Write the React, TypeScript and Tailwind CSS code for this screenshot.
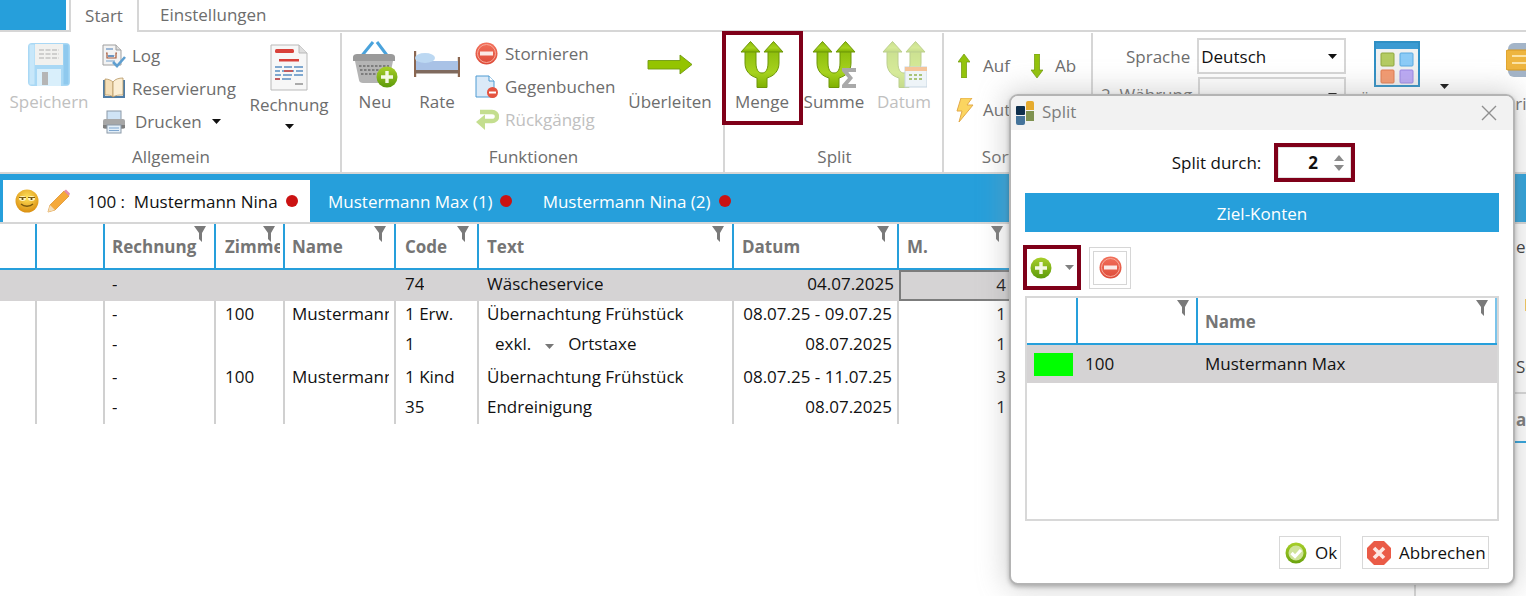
import type { ReactNode } from "react";

type IconProps = { className?: string };

function Caret({ color = "#111", className = "" }: { color?: string; className?: string }) {
  return (
    <svg viewBox="0 0 9 5" className={`h-[5px] w-[9px] ${className}`}>
      <path d="M0 0h9L4.5 5z" fill={color} />
    </svg>
  );
}

function Funnel({ className = "" }: IconProps) {
  return (
    <svg viewBox="0 0 12 16" className={`absolute top-[2px] h-[16px] w-[12px] ${className}`}>
      <path d="M0 0h12L8 7v9l-3-3V7z" fill="#7a7a7a" />
    </svg>
  );
}

function Floppy() {
  return (
    <svg viewBox="0 0 42 43" className="h-[43px] w-[42px]">
      <rect x="0" y="0" width="42" height="43" rx="4" fill="#a9d8f5" />
      <rect x="1.5" y="1.5" width="5" height="40" fill="#c7e7fa" />
      <rect x="35.5" y="1.5" width="5" height="40" fill="#8fc9ee" />
      <rect x="7" y="1" width="28" height="21" fill="#f1f1ef" />
      <path d="M11 7h20M11 11h20M11 15h20" stroke="#c4c4c4" strokeWidth="1.4" strokeDasharray="5 1.5" />
      <rect x="9" y="26" width="24" height="17" fill="#d9effb" />
      <rect x="14" y="29" width="6" height="13" fill="#b5b5b5" />
    </svg>
  );
}

function LogIcon() {
  return (
    <svg viewBox="0 0 24 24" className="h-[24px] w-[24px]">
      <path d="M1 1h13l5 5v15H1z" fill="#f3f3f3" stroke="#9f9f9f" />
      <path d="M14 1v5h5" fill="#dcdcdc" stroke="#9f9f9f" />
      <path d="M4 5h7" stroke="#6d96c4" strokeWidth="1.3" />
      <path d="M4 9h1v5h9V9h1" fill="none" stroke="#a85a3a" strokeWidth="1.2" />
      <path d="M6 11l1 2 1-2 1 2 1-2 1 2 1-2" fill="none" stroke="#4b7fb6" strokeWidth="1" />
      <path d="M4 17h9" stroke="#8cb0d4" strokeWidth="1.2" />
      <path d="M11 18l4 4 8-9" fill="none" stroke="#5f9fd0" strokeWidth="2.6" />
    </svg>
  );
}

function BookIcon() {
  return (
    <svg viewBox="0 0 24 23" className="h-[23px] w-[24px]">
      <path d="M1 3v18h22V3h-2v16H3V3z" fill="#4f7da6" />
      <path d="M3 2c3 0 6 1 8 3v15c-2-2-5-2-8-2z" fill="#f4dfb8" stroke="#b59460" strokeWidth=".8" />
      <path d="M21 1c-4 0-8 1-10 4v15c3-2 6-2 10-2z" fill="#fbeed4" stroke="#b59460" strokeWidth=".8" />
    </svg>
  );
}

function PrinterIcon() {
  return (
    <svg viewBox="0 0 24 24" className="h-[24px] w-[24px]">
      <rect x="5" y="1" width="14" height="9" fill="#cfe3f5" stroke="#8c9aa8" />
      <rect x="1" y="9" width="22" height="10" rx="2" fill="#a7a7a7" />
      <rect x="1" y="15" width="22" height="3" fill="#7f7f7f" />
      <rect x="5" y="15" width="14" height="8" fill="#e2eef8" stroke="#8c9aa8" />
      <path d="M7 18h10M7 20.5h10" stroke="#7ea6cf" />
    </svg>
  );
}

function InvoiceIcon() {
  return (
    <svg viewBox="0 0 38 47" className="h-[47px] w-[38px]">
      <path d="M1 1h28l8 8v37H1z" fill="#f7f7f7" stroke="#b9b9b9" />
      <path d="M29 1v8h8" fill="#dedede" stroke="#b9b9b9" />
      <rect x="5" y="5" width="19" height="4" rx="1.5" fill="#d8413a" />
      <rect x="9" y="15" width="20" height="2.5" fill="#d8413a" />
      <path d="M5 23h7M14 23h8M24 23h9M5 27h5M12 27h12M26 27h7M5 31h6M13 31h9M24 31h9M5 35h5M12 35h9" stroke="#5a8fc2" strokeWidth="1.4" />
      <path d="M14 27h9M5 35h5" stroke="#d8413a" strokeWidth="1.4" />
      <path d="M25 40h8" stroke="#8a8a8a" strokeWidth="1.4" />
    </svg>
  );
}

function PlusBadge({ size = 22 }: { size?: number }) {
  return (
    <svg viewBox="0 0 22 22" width={size} height={size}>
      <defs>
        <linearGradient id="plusGrad" x1="0" y1="0" x2="0" y2="1">
          <stop offset="0" stopColor="#a8cf2a" />
          <stop offset="1" stopColor="#5d9a0a" />
        </linearGradient>
      </defs>
      <circle cx="11" cy="11" r="10.5" fill="url(#plusGrad)" />
      <path d="M11 5v12M5 11h12" stroke="#f4f9e4" strokeWidth="3.4" />
    </svg>
  );
}

function MinusBadge({ size = 23 }: { size?: number }) {
  return (
    <svg viewBox="0 0 23 23" width={size} height={size}>
      <defs>
        <linearGradient id="minusGrad" x1="0" y1="0" x2="0" y2="1">
          <stop offset="0" stopColor="#f2705a" />
          <stop offset="1" stopColor="#dd4b39" />
        </linearGradient>
      </defs>
      <circle cx="11.5" cy="11.5" r="11" fill="url(#minusGrad)" />
      <circle cx="11.5" cy="11.5" r="9" fill="none" stroke="#f8a999" strokeWidth="1" />
      <rect x="5" y="9.5" width="13" height="4" fill="#fbeae6" />
    </svg>
  );
}

function Basket() {
  return (
    <svg viewBox="0 0 46 47" className="h-[47px] w-[46px]">
      <path d="M21 1L8 17M25 1l12 16" stroke="#4aa3dc" strokeWidth="3" fill="none" />
      <path d="M1 16c0-2 2-3 4-3h34c2 0 4 1 4 3v4H1z" fill="#9a9a9a" />
      <path d="M3 20h38l-4 19c0 2-2 3-4 3H11c-2 0-4-1-4-3z" fill="#b4b4b4" />
      <path d="M7 25h30M8 29h28M9 33h26" stroke="#7d7d7d" strokeWidth="2" strokeDasharray="2.5 1.5" />
      <g transform="translate(24 25)">
        <PlusBadge />
      </g>
    </svg>
  );
}

function Bed() {
  return (
    <svg viewBox="0 0 46 28" className="h-[28px] w-[46px]">
      <path d="M1 0v26M45 6v20" stroke="#8a6650" strokeWidth="2.4" />
      <rect x="2" y="10" width="42" height="12" fill="#a9c2e6" />
      <rect x="2" y="19" width="42" height="3.5" fill="#7f6a5e" />
      <ellipse cx="11" cy="7" rx="10" ry="5" fill="#bcd8f2" />
    </svg>
  );
}

function GegenIcon() {
  return (
    <svg viewBox="0 0 24 24" className="h-[24px] w-[24px]">
      <path d="M1 1h13l5 5v16H1z" fill="#dbeaf8" stroke="#4f9bd2" />
      <path d="M14 1v5h5" fill="#fff" stroke="#4f9bd2" />
      <circle cx="17.5" cy="17.5" r="5.5" fill="#e5533f" />
      <rect x="14" y="16.5" width="7" height="2" fill="#fff" />
    </svg>
  );
}

function UndoIcon() {
  return (
    <svg viewBox="0 0 24 22" className="h-[22px] w-[24px]">
      <path d="M5 3h12c3 0 5 2 5 4.5S20 12 17 12H9" fill="none" stroke="#c4de8f" strokeWidth="4.4" />
      <path d="M10 5.5L1 13l9 8z" fill="#c4de8f" />
    </svg>
  );
}

function ArrowRightGreen() {
  return (
    <svg viewBox="0 0 46 21" className="h-[21px] w-[46px]">
      <path d="M1 6.5h32V1l12 9.5L33 20v-5H1z" fill="#94c400" stroke="#6f9a10" strokeWidth=".9" />
    </svg>
  );
}

function SplitArrows({ id, faded = false, children }: { id: string; faded?: boolean; children?: ReactNode }) {
  return (
    <svg viewBox="0 0 46 47" className="h-[47px] w-[46px]">
      <defs>
        <linearGradient id={id} x1="0" y1="0" x2="0" y2="1">
          <stop offset="0" stopColor="#8dbd0c" />
          <stop offset=".6" stopColor="#a6d21e" />
          <stop offset="1" stopColor="#7fb000" />
        </linearGradient>
      </defs>
      <g opacity={faded ? 0.45 : 1} fill={`url(#${id})`} stroke="#6d9608" strokeWidth="1">
        <path d="M6 9V22C6 30 11 35 18 37V46.5H28V37C35 35 40 30 40 22V9H29V22C29 28 27 32 23 32C19 32 17 28 17 22V9Z" />
        <path d="M2 11L11.5 .5L21 11ZM25 11L34.5 .5L44 11Z" />
      </g>
      {children}
    </svg>
  );
}

function ArrowV({ up }: { up: boolean }) {
  return (
    <svg viewBox="0 0 12 24" className="h-[24px] w-[12px]">
      <path
        d={up ? "M6 0l6 8H8.5v16h-5V8H0z" : "M6 24l6-8H8.5V0h-5v16H0z"}
        fill="#93c30c"
        stroke="#6d9608"
        strokeWidth=".7"
      />
    </svg>
  );
}

function Bolt() {
  return (
    <svg viewBox="0 0 18 24" className="h-[24px] w-[18px]">
      <path d="M5 0h11l-5 7h6L3 24l3-11H1z" fill="#fbd560" stroke="#e2a94a" />
    </svg>
  );
}

function LayoutIcon() {
  return (
    <svg viewBox="0 0 46 46" className="h-[46px] w-[46px]">
      <rect x="1" y="1" width="44" height="44" fill="#f1f1f1" stroke="#2f8fc4" strokeWidth="2" />
      <rect x="2" y="2" width="42" height="6" fill="#3b9ad2" />
      <rect x="7" y="12" width="13" height="13" rx="1" fill="#b4cb62" stroke="#8fa83e" />
      <rect x="26" y="12" width="13" height="13" rx="1" fill="#8ccbf7" stroke="#5aa9e0" />
      <rect x="7" y="29" width="13" height="13" rx="1" fill="#f49a70" stroke="#e07b4e" />
      <rect x="26" y="29" width="13" height="13" rx="1" fill="#bba9f5" stroke="#9a86e2" />
    </svg>
  );
}

function DrawerIcon() {
  return (
    <svg viewBox="0 0 44 34" className="h-[34px] w-[44px]">
      <rect x="2" y="0" width="40" height="34" rx="6" fill="#a3b4c8" />
      <rect x="0" y="7" width="44" height="20" rx="2" fill="#eeb53f" stroke="#d79820" />
      <path d="M6 13h28M6 20h28" stroke="#fbe3a6" strokeWidth="2" />
    </svg>
  );
}

function Smiley() {
  return (
    <svg viewBox="0 0 24 24" className="h-[24px] w-[24px]">
      <defs>
        <radialGradient id="smile" cx=".5" cy=".35" r=".7">
          <stop offset="0" stopColor="#ffe25a" />
          <stop offset="1" stopColor="#d8890c" />
        </radialGradient>
      </defs>
      <circle cx="12" cy="12" r="11.5" fill="url(#smile)" />
      <ellipse cx="7.5" cy="9.5" rx="3.5" ry="2.4" fill="#fff6c4" />
      <ellipse cx="16.5" cy="9.5" rx="3.5" ry="2.4" fill="#fff6c4" />
      <path d="M4 8.5h7M13 8.5h7" stroke="#7a5a10" strokeWidth="1.2" />
      <circle cx="7.5" cy="10" r="1.1" fill="#5a4310" />
      <circle cx="16.5" cy="10" r="1.1" fill="#5a4310" />
      <path d="M6 15c3 3 9 3 12 0" fill="none" stroke="#7a5a10" strokeWidth="1.3" />
    </svg>
  );
}

function Pencil() {
  return (
    <svg viewBox="0 0 24 24" className="h-[24px] w-[24px]">
      <path d="M1 23l2-7L17 2l5 5L8 21z" fill="#f5a93a" stroke="#d98a20" strokeWidth=".7" />
      <path d="M17 2l2-1.5 4 4L22 7z" fill="#e48db0" />
      <path d="M1 23l2-7 5 5z" fill="#f3dcb6" />
    </svg>
  );
}

function DialogLogo() {
  return (
    <div className="flex h-[24px] w-[18px] gap-[1px]">
      <div className="flex flex-1 flex-col gap-[1px] pt-[5px]">
        <div className="h-[9px] rounded-[1px] bg-[#0e2f4d]" />
        <div className="h-[9px] rounded-b-[2px] bg-[#45749b]" />
      </div>
      <div className="flex flex-1 flex-col gap-[1px]">
        <div className="h-[9px] rounded-t-[2px] bg-[#e6ab2e]" />
        <div className="h-[10px] bg-[#7f9250]" />
      </div>
    </div>
  );
}

function OkIcon() {
  return (
    <svg viewBox="0 0 22 22" className="h-[22px] w-[22px]">
      <defs>
        <linearGradient id="okGrad" x1="0" y1="0" x2="0" y2="1">
          <stop offset="0" stopColor="#a8cf2a" />
          <stop offset="1" stopColor="#6aa30e" />
        </linearGradient>
      </defs>
      <circle cx="11" cy="11" r="10.5" fill="url(#okGrad)" />
      <circle cx="11" cy="11" r="7.5" fill="#cfe39a" />
      <path d="M6.5 11l3.5 3.5 6-6.5" fill="none" stroke="#fff" strokeWidth="3.2" />
    </svg>
  );
}

function CancelIcon() {
  return (
    <svg viewBox="0 0 24 24" className="h-[24px] w-[24px]">
      <path d="M7 0h10l7 7v10l-7 7H7l-7-7V7z" fill="#ea5b47" />
      <path d="M7 7l10 10M17 7L7 17" stroke="#fde8e3" strokeWidth="3.6" />
    </svg>
  );
}

function BigButton({ icon, label, width, muted, caret }: { icon: ReactNode; label: string; width: string; muted?: boolean; caret?: boolean }) {
  return (
    <div className={`flex flex-col items-center ${width}`}>
      <div className="flex h-[51px] items-center justify-center">{icon}</div>
      <div className={`h-[23px] pt-[1px] whitespace-nowrap leading-[22px] ${muted ? "text-[#c0c0c0]" : "text-[#6d6d6d]"}`}>{label}</div>
      {caret && <Caret className="mt-[8px]" />}
    </div>
  );
}

function SmallRow({ icon, label, muted, labelClass = "", children }: { icon: ReactNode; label: string; muted?: boolean; labelClass?: string; children?: ReactNode }) {
  return (
    <div className="flex h-[33px] items-center">
      <div className="flex w-[30px] shrink-0 justify-start">{icon}</div>
      <span className={`whitespace-nowrap ${labelClass} ${muted ? "text-[#c0c0c0]" : "text-[#6d6d6d]"}`}>{label}</span>
      {children}
    </div>
  );
}

function Group({ label, width, children }: { label: string; width: string; children: ReactNode }) {
  return (
    <div className={`relative flex h-[139px] shrink-0 flex-col justify-between border-r-2 border-[#d6d6d6] pb-[4px] ${width}`}>
      <div className="flex">{children}</div>
      <div className="h-[22px] pl-[2px] text-center leading-[22px] text-[#6d6d6d]">{label}</div>
    </div>
  );
}

const columns = [
  { title: "", w: "w-[37px]", funnel: false },
  { title: "", w: "w-[68px]", funnel: false },
  { title: "Rechnung", w: "w-[111px]", funnel: true, pad: "pl-[7px]" },
  { title: "Zimmer", w: "w-[69px]", funnel: true, pad: "pl-[9px] pr-[3px]" },
  { title: "Name", w: "w-[111px]", funnel: true, pad: "pl-[7px] pr-[5px]" },
  { title: "Code", w: "w-[83px]", funnel: true, pad: "pl-[9px]" },
  { title: "Text", w: "w-[255px]", funnel: true, pad: "pl-[8px]" },
  { title: "Datum", w: "w-[165px]", funnel: true, pad: "pl-[8px]" },
  { title: "M.", w: "w-[114px]", funnel: true, pad: "pl-[8px]" },
];

const rows = [
  { h: "h-[31px]", pb: "pb-[4px]", cells: ["", "", "-", "", "", "74", "Wäscheservice", "04.07.2025", "4"], selected: true },
  { h: "h-[29px]", pb: "pb-[4px]", cells: ["", "", "-", "100", "Mustermann", "1 Erw.", "Übernachtung Frühstück", "08.07.25 - 09.07.25", "1"] },
  { h: "h-[31px]", pb: "pb-[4px]", cells: ["", "", "-", "", "", "1", "", "08.07.2025", "1"], exkl: true },
  { h: "h-[33px]", pb: "pb-[2px]", cells: ["", "", "-", "100", "Mustermann", "1 Kind", "Übernachtung Frühstück", "08.07.25 - 11.07.25", "3"] },
  { h: "h-[30px]", pb: "pb-[5px]", cells: ["", "", "-", "", "", "35", "Endreinigung", "08.07.2025", "1"] },
];

function BookingGrid() {
  return (
    <div className="min-w-0 flex-1 overflow-hidden">
      <div className="flex h-[46px] border-b-2 border-[#269fdb]">
        {columns.map((col, i) => (
          <div
            key={i}
            className={`relative shrink-0 border-r-2 border-[#269fdb] pt-[10px] font-bold whitespace-nowrap text-[#757575] ${col.w} ${col.pad ?? ""}`}
          >
            <div className="overflow-hidden">{col.title}</div>
            {col.funnel && <Funnel className="right-[8px]" />}
          </div>
        ))}
      </div>
      {rows.map((row, r) => (
        <div key={r} className={`flex ${row.h} ${row.selected ? "bg-[#d5d3d4]" : ""}`}>
          {row.cells.map((cell, i) => {
            const col = columns[i];
            const right = i >= 7;
            const activeCell = row.selected && i === 8;
            return (
              <div
                key={i}
                className={`flex shrink-0 items-center whitespace-nowrap text-[#111] ${activeCell ? "" : row.pb} ${col.w} ${
                  row.selected ? "" : "border-r-2 border-[#d0d0d0]"
                } ${right ? "justify-end pr-[5px]" : (col.pad ?? "")} ${
                  activeCell ? "border-2 border-[#7c7c7c] pb-[2px]" : ""
                }`}
              >
                {row.exkl && i === 6 ? (
                  <span className="flex items-center pl-[8px]">
                    exkl.
                    <Caret color="#777" className="mx-[14px] mt-[6px]" />
                    Ortstaxe
                  </span>
                ) : (
                  <span className="min-w-0 overflow-hidden">{cell}</span>
                )}
              </div>
            );
          })}
        </div>
      ))}
    </div>
  );
}

function SplitDialog() {
  return (
    <div className="absolute top-[94px] left-[1009px] z-10 flex h-[491px] w-[506px] flex-col rounded-[9px] border-2 border-[#b4b4b4] bg-white shadow-[0_2px_4px_rgba(0,0,0,0.25),0_0_28px_4px_rgba(150,150,150,0.4)]">
      <div className="flex h-[34px] shrink-0 items-center rounded-t-[7px] bg-[#f2f2f2] pr-[16px] pl-[5px]">
        <DialogLogo />
        <span className="mb-[2px] ml-[8px] text-[#7d7d7d]">Split</span>
        <svg viewBox="0 0 16 16" className="ml-auto h-[16px] w-[16px]">
          <path d="M1 1l14 14M15 1L1 15" stroke="#8f8f8f" strokeWidth="1.4" />
        </svg>
      </div>

      <div className="flex items-center justify-center gap-[13px] pt-[13px] pl-[3px]">
        <span className="text-[#111]">Split durch:</span>
        <div className="flex h-[39px] w-[81px] items-center border-4 border-[#7f0019] pr-[7px] shadow-[inset_0_0_0_1px_#e2e2e2]">
          <span className="ml-[30px] font-bold text-[#111]">2</span>
          <div className="ml-auto flex flex-col gap-[4px]">
            <svg viewBox="0 0 10 6" className="h-[6px] w-[10px]"><path d="M5 0l5 6H0z" fill="#8a8a8a" /></svg>
            <svg viewBox="0 0 10 6" className="h-[6px] w-[10px]"><path d="M5 6l5-6H0z" fill="#8a8a8a" /></svg>
          </div>
        </div>
      </div>

      <div className="mx-[14px] mt-[11px] flex h-[39px] shrink-0 items-center justify-center bg-[#269fdb] pt-[2px] text-white">Ziel-Konten</div>

      <div className="mt-[13px] ml-[12px] flex items-center gap-[8px]">
        <div className="flex h-[45px] w-[58px] items-center border-4 border-[#7f0019] pl-[3px]">
          <PlusBadge />
          <Caret color="#808080" className="ml-[13px]" />
        </div>
        <div className="flex h-[42px] w-[42px] items-center justify-center border border-[#d6d6d6] p-[3px]">
          <div className="flex h-full w-full items-center justify-center border border-[#d6d6d6]">
            <MinusBadge />
          </div>
        </div>
      </div>

      <div className="mx-[14px] mt-[6px] h-[225px] shrink-0 border-2 border-[#d8d8d8]">
        <div className="flex h-[47px] border-b-2 border-[#269fdb]">
          <div className="w-[51px] shrink-0 border-r-2 border-[#269fdb]" />
          <div className="relative w-[120px] shrink-0 border-r-2 border-[#269fdb]">
            <Funnel className="right-[7px] top-0" />
          </div>
          <div className="relative flex-1 border-r-2 border-[#7cc4ea] pt-[11px] pl-[7px] font-bold text-[#757575]">
            Name
            <Funnel className="right-[7px] top-0" />
          </div>
        </div>
        <div className="flex h-[38px] items-center bg-[#d5d3d4] text-[#111]">
          <div className="ml-[7px] h-[23px] w-[39px] bg-[#00ff00]" />
          <span className="ml-[12px] w-[120px]">100</span>
          <span>Mustermann Max</span>
        </div>
      </div>

      <div className="mt-[15px] mr-[24px] flex justify-end gap-[21px] text-[#111]">
        <div className="flex h-[33px] w-[62px] items-center gap-[8px] border border-[#d8d8d8] pl-[5px]">
          <OkIcon />
          <span className="pt-[1px]">Ok</span>
        </div>
        <div className="flex h-[33px] w-[127px] items-center gap-[8px] border border-[#d8d8d8] pl-[4px]">
          <CancelIcon />
          <span className="pt-[1px]">Abbrechen</span>
        </div>
      </div>
    </div>
  );
}

export default function App() {
  return (
    <div className="relative h-[596px] w-[1526px] overflow-hidden bg-white font-['Open_Sans',sans-serif] text-[17px]">
      <div className="flex h-[32px] border-b-2 border-[#d6d6d6]">
        <div className="h-[30px] w-[66px] bg-[#269fdb]" />
        <div className="ml-[3px] flex h-[32px] w-[70px] items-center justify-center border-x-2 border-[#d6d6d6] bg-white text-[#6d6d6d]">Start</div>
        <div className="ml-[21px] flex h-[30px] items-center text-[#6d6d6d]">Einstellungen</div>
      </div>

      <div className="flex h-[140px] pt-[1px]">
        <Group label="Allgemein" width="w-[342px]">
          <div className="ml-[10px] pt-[6px]">
            <BigButton width="w-[78px]" muted icon={<Floppy />} label="Speichern" />
          </div>
          <div className="ml-[14px] w-[134px] pt-[6px]">
            <SmallRow icon={<LogIcon />} label="Log" />
            <SmallRow icon={<BookIcon />} label="Reservierung" />
            <SmallRow icon={<PrinterIcon />} label="Drucken" labelClass="ml-[3px]">
              <Caret className="ml-[10px]" />
            </SmallRow>
          </div>
          <div className="ml-[14px] pt-[9px]">
            <BigButton width="w-[78px]" icon={<InvoiceIcon />} label="Rechnung" caret />
          </div>
        </Group>

        <Group label="Funktionen" width="w-[383px]">
          <div className="ml-[10px] pt-[6px]">
            <BigButton width="w-[46px]" icon={<Basket />} label="Neu" />
          </div>
          <div className="ml-[16px] pt-[6px]">
            <BigButton width="w-[46px]" icon={<Bed />} label="Rate" />
          </div>
          <div className="ml-[15px] w-[140px] pt-[4px]">
            <SmallRow icon={<MinusBadge />} label="Stornieren" />
            <SmallRow icon={<GegenIcon />} label="Gegenbuchen" />
            <SmallRow icon={<UndoIcon />} label="Rückgängig" muted />
          </div>
          <div className="ml-[14px] pt-[6px]">
            <BigButton width="w-[82px]" icon={<ArrowRightGreen />} label="Überleiten" />
          </div>
        </Group>

        <Group label="Split" width="w-[219px]">
          <div className="ml-[1px] flex pt-[6px]">
            <BigButton width="w-[72px]" icon={<SplitArrows id="splitA" />} label="Menge" />
            <BigButton
              width="w-[72px]"
              icon={
                <SplitArrows id="splitB">
                  <path d="M31 27h14v4h-8l5 6-5 6h8v4H31v-3l6-7-6-7z" fill="#a9a9a9" />
                </SplitArrows>
              }
              label="Summe"
            />
            <BigButton
              width="w-[68px]"
              muted
              icon={
                <SplitArrows id="splitC" faded>
                  <rect x="24" y="26" width="22" height="20" fill="#eef4f8" stroke="#c7d6e2" />
                  <rect x="24" y="26" width="22" height="4" fill="#f5c49a" />
                  <path d="M28 34h3M33 34h3M38 34h3M28 38h3M33 38h3M38 38h3" stroke="#a9c47a" strokeWidth="2" />
                </SplitArrows>
              }
              label="Datum"
            />
          </div>
        </Group>

        <Group label="Sortieren" width="w-[149px]">
          <div className="pt-[20px] pl-[12px]">
            <div className="flex h-[26px] items-center text-[#6d6d6d]">
              <div className="ml-[2px] w-[25px]"><ArrowV up /></div>
              <span className="w-[48px]">Auf</span>
              <div className="w-[24px]"><ArrowV up={false} /></div>
              <span>Ab</span>
            </div>
            <div className="mt-[18px] flex h-[26px] items-center text-[#6d6d6d]">
              <div className="w-[27px]"><Bolt /></div>
              <span>Auto</span>
            </div>
          </div>
        </Group>

        <div className="flex flex-1 pt-[5px] pl-[8px]">
          <div className="w-[245px]">
            <div className="flex items-center gap-[7px]">
              <span className="w-[90px] pt-[1px] text-right text-[#6d6d6d]">Sprache</span>
              <div className="flex h-[36px] w-[150px] items-center border-2 border-[#d6d6d6] pt-[1px] pr-[7px] pl-[2px] text-[#111]">
                Deutsch
                <Caret className="ml-auto" />
              </div>
            </div>
            <div className="mt-[3px] flex items-center gap-[7px]">
              <span className="w-[90px] text-right whitespace-nowrap text-[#6d6d6d]">2. Währung</span>
              <div className="flex h-[36px] w-[150px] items-center border-2 border-[#d6d6d6] pr-[7px]">
                <Caret className="ml-auto" />
              </div>
            </div>
          </div>
          <div className="ml-[28px] flex w-[46px] flex-col items-center pt-[3px]">
            <LayoutIcon />
            <span className="mt-[1px] text-[#6d6d6d]">Übersicht</span>
          </div>
          <Caret className="mt-[46px] ml-[20px]" />
          <div className="ml-[57px] flex flex-col pt-[5px] text-[#6d6d6d]">
            <DrawerIcon />
            <span className="mt-[14px] -ml-[3px]">Drinks</span>
          </div>
        </div>
      </div>

      <div className="h-[2px] bg-[#d6d6d6]" />
      <div className="flex h-[48px] items-end bg-[#269fdb] pl-[3px] text-white">
        <div className="flex h-[42px] w-[307px] items-center bg-white pl-[12px] text-[#111]">
          <Smiley />
          <div className="ml-[8px]"><Pencil /></div>
          <span className="ml-[16px] pt-[1px] whitespace-pre">100 :  Mustermann Nina</span>
          <span className="ml-[8px] h-[12px] w-[12px] rounded-full bg-[#cb1212]" />
        </div>
        <div className="flex h-[42px] items-center pl-[18px]">
          <span className="pt-[1px]">Mustermann Max (1)</span>
          <span className="ml-[7px] h-[12px] w-[12px] rounded-full bg-[#cb1212]" />
        </div>
        <div className="flex h-[42px] items-center pl-[31px]">
          <span className="pt-[1px]">Mustermann Nina (2)</span>
          <span className="ml-[8px] h-[12px] w-[12px] rounded-full bg-[#cb1212]" />
        </div>
      </div>
      <div className="h-[2px] bg-[#d6d6d6]" />

      <div className="flex h-[372px]">
        <BookingGrid />
        <div className="w-[112px] shrink-0 overflow-hidden border-l-2 border-[#d6d6d6] pl-[100px] whitespace-nowrap text-[#333]">
          <div className="pt-[10px]">er</div>
          <div className="mt-[32px] pl-[8px] text-[#c46a10]">I</div>
          <div className="mt-[37px]">Se</div>
          <div className="mt-[12px] -ml-[100px] h-[2px] bg-[#d6d6d6]" />
          <div className="mt-[13px] font-bold text-[#757575]">at</div>
          <div className="mt-[9px] -ml-[100px] h-[2px] bg-[#269fdb]" />
        </div>
      </div>

      <div className="absolute top-[31px] left-[722px] z-[5] h-[94px] w-[81px] border-4 border-[#7f0019]" />
      <SplitDialog />
    </div>
  );
}
